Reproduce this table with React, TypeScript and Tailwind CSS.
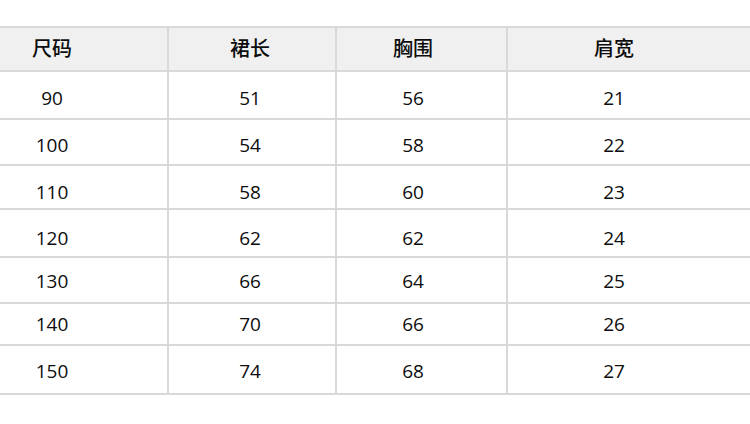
const header = ['尺码', '裙长', '胸围', '肩宽'];

const rows = [
  { h: 'h-[48px]', pt: 'pt-[7px]', cells: ['90', '51', '56', '21'] },
  { h: 'h-[46px]', pt: 'pt-[6px]', cells: ['100', '54', '58', '22'] },
  { h: 'h-[44px]', pt: 'pt-[10px]', cells: ['110', '58', '60', '23'] },
  { h: 'h-[48px]', pt: 'pt-[10px]', cells: ['120', '62', '62', '24'] },
  { h: 'h-[46px]', pt: 'pt-[3px]', cells: ['130', '66', '64', '25'] },
  { h: 'h-[42px]', pt: 'pt-[0px]', cells: ['140', '70', '66', '26'] },
  { h: 'h-[49px]', pt: 'pt-[4px]', cells: ['150', '74', '68', '27'] },
];

// column boxes: width, right border, inner offset to match the text centres
const cols = [
  'w-[169px] border-r-2 pr-[63px]',
  'w-[168px] border-r-2 pr-[4px]',
  'w-[171px] border-r-2 pr-[17px]',
  'flex-1 pr-[30px]',
];

export default function App() {
  return (
    <div
      className="w-[750px] h-[424px] bg-white text-[#0d0d0d] overflow-hidden"
      style={{ fontFamily: '"Open Sans", "Noto Sans CJK SC", sans-serif' }}
    >
      <div className="h-[26px]" />
      <div className="flex h-[46px] bg-[#f0f0f0] border-y-2 border-[#d9d9d9]">
        {header.map((t, i) => (
          <div key={t} className={`${cols[i]} border-[#d9d9d9] flex items-center justify-center text-[20px] font-medium`}>
            {t}
          </div>
        ))}
      </div>
      {rows.map((r) => (
        <div key={r.cells[0]} className={`flex ${r.h} border-b-2 border-[#d9d9d9]`}>
          {r.cells.map((c, i) => (
            <div key={i} className={`${cols[i]} ${r.pt} border-[#d9d9d9] flex items-center justify-center text-[19px]`}>
              {c}
            </div>
          ))}
        </div>
      ))}
    </div>
  );
}
